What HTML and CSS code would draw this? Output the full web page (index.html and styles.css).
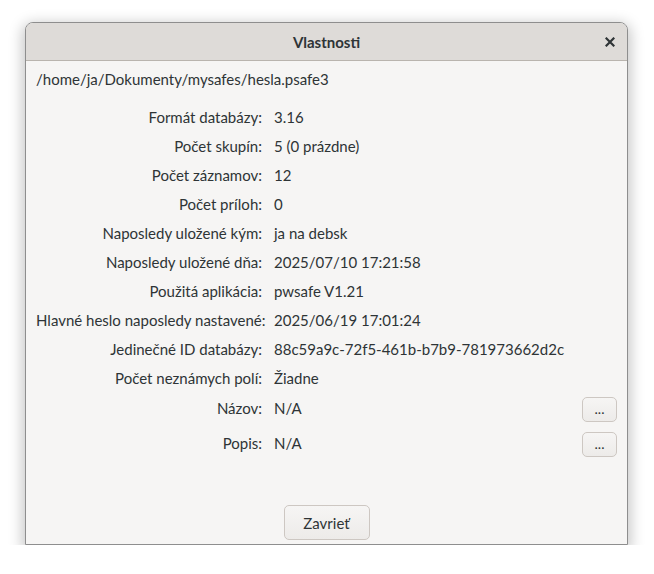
FILE: index.html
```html
<!DOCTYPE html>
<html lang="sk">
<head>
<meta charset="utf-8">
<title>Vlastnosti</title>
<link rel="stylesheet" href="styles.css">
</head>
<body>
<div class="window">
  <header class="titlebar">
    <span class="spacer"></span>
    <h1 class="title">Vlastnosti</h1>
    <button class="close" aria-label="Zavrieť">
      <svg width="10" height="10" viewBox="0 0 10 10"><path d="M1.5 1.5 L8.5 8.5 M8.5 1.5 L1.5 8.5" stroke="#2e3436" stroke-width="2.2" stroke-linecap="square"/></svg>
    </button>
  </header>
  <main class="content">
    <div class="path">/home/ja/Dokumenty/mysafes/hesla.psafe3</div>
    <div class="grid">
      <div class="label">Formát databázy:</div><div class="value">3.16</div><div class="act"></div>
      <div class="label">Počet skupín:</div><div class="value">5 (0 prázdne)</div><div class="act"></div>
      <div class="label">Počet záznamov:</div><div class="value">12</div><div class="act"></div>
      <div class="label">Počet príloh:</div><div class="value">0</div><div class="act"></div>
      <div class="label">Naposledy uložené kým:</div><div class="value">ja na debsk</div><div class="act"></div>
      <div class="label">Naposledy uložené dňa:</div><div class="value">2025/07/10 17:21:58</div><div class="act"></div>
      <div class="label">Použitá aplikácia:</div><div class="value">pwsafe V1.21</div><div class="act"></div>
      <div class="label">Hlavné heslo naposledy nastavené:</div><div class="value">2025/06/19 17:01:24</div><div class="act"></div>
      <div class="label">Jedinečné ID databázy:</div><div class="value">88c59a9c-72f5-461b-b7b9-781973662d2c</div><div class="act"></div>
      <div class="label">Počet neznámych polí:</div><div class="value">Žiadne</div><div class="act"></div>
      <div class="label brow">Názov:</div><div class="value brow">N/A</div><div class="act"><button class="dots">...</button></div>
      <div class="label brow">Popis:</div><div class="value brow">N/A</div><div class="act"><button class="dots">...</button></div>
    </div>
  </main>
  <footer class="footer">
    <button class="btn">Zavrieť</button>
  </footer>
</div>
</body>
</html>
```
FILE: styles.css
```css
html, body {
  margin: 0;
  padding: 0;
  background: #ffffff;
}
body {
  padding: 22px 25px 0 25px;
  font-family: Lato, "Noto Sans", sans-serif;
  font-size: 15px;
  color: #2e3436;
}
.window {
  width: 603px;
  height: 523px;
  box-sizing: border-box;
  border: 1px solid #8e8e8e;
  border-radius: 8px 8px 0 0;
  background: #f6f5f4;
  box-shadow: 0 4px 14px 3px rgba(0,0,0,0.22);
  display: flex;
  flex-direction: column;
  overflow: hidden;
}
.titlebar {
  height: 37px;
  flex: none;
  background: #dedbd8;
  border-bottom: 1px solid #b9b4ae;
  display: grid;
  grid-template-columns: 40px 1fr 40px;
  align-items: center;
}
.title {
  margin: 0;
  text-align: center;
  font-size: 15px;
  font-weight: 700;
  color: #2e3436;
}
.close {
  border: 0;
  background: transparent;
  padding: 0 0 0 6px;
  width: 40px;
  height: 37px;
  display: flex;
  align-items: center;
  justify-content: center;
}
.content {
  flex: 1;
  padding: 4px 10px 0 10px;
}
.path {
  line-height: 29px;
  margin-bottom: 8px;
}
.grid {
  display: grid;
  grid-template-columns: 226px auto 1fr;
  grid-template-rows: repeat(10, 29px) 35px 35px;
  column-gap: 12px;
  align-items: center;
}
.label {
  text-align: right;
  white-space: nowrap;
}
.brow {
  padding-bottom: 3px;
}
.act {
  display: flex;
  justify-content: flex-end;
}
.dots {
  width: 35px;
  height: 25px;
  box-sizing: border-box;
  border: 1px solid #cdc7c2;
  border-radius: 5px;
  background: linear-gradient(#f6f5f4, #edebe9);
  font-family: inherit;
  font-size: 14px;
  color: #2e3436;
  padding: 0 0 2px 0;
}
.footer {
  flex: none;
  display: flex;
  justify-content: center;
  padding-bottom: 4px;
}
.btn {
  width: 86px;
  height: 35px;
  box-sizing: border-box;
  border: 1px solid #cdc7c2;
  border-radius: 5px;
  background: linear-gradient(#f6f5f4, #edebe9);
  font-family: inherit;
  font-size: 15px;
  color: #2e3436;
}
```
